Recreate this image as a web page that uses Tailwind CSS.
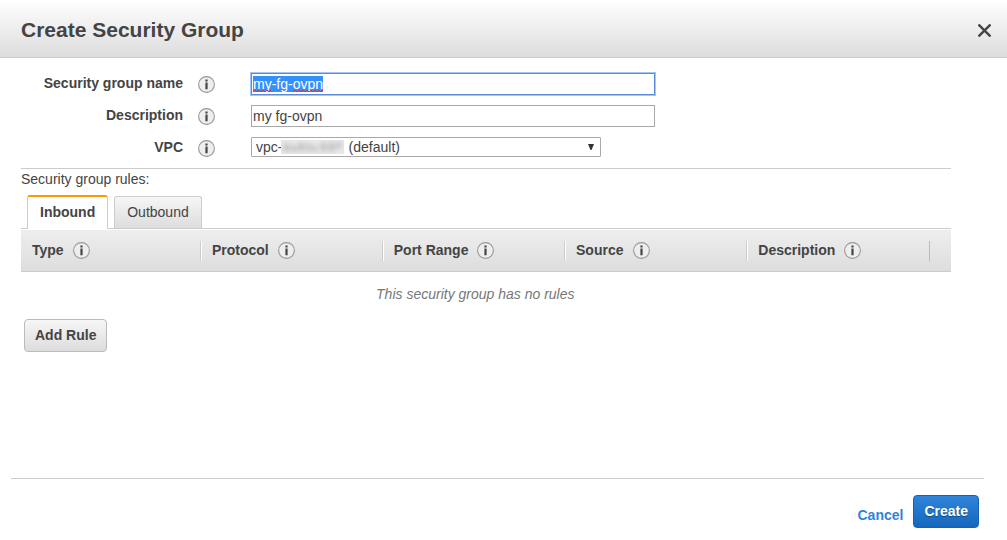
<!DOCTYPE html>
<html lang="en">
<head>
<meta charset="utf-8">
<meta name="viewport" content="width=device-width, initial-scale=1">
<title>Create Security Group</title>
<script src="https://cdn.jsdelivr.net/npm/@tailwindcss/browser@4"></script>
</head>
<body class="flex min-h-screen flex-col bg-white font-['Liberation_Sans',Arial,sans-serif] text-sm text-[#444]">
<svg class="hidden" aria-hidden="true">
  <defs>
    <symbol id="info" viewBox="0 0 17 17">
      <circle cx="8.5" cy="8.5" r="7.9" fill="#eee" stroke="#999" stroke-width="1.1"/>
      <path d="M7.4 3.5h2.2v2H7.4zM7.4 6.6h2.2v6.6H7.4z" fill="#444"/>
    </symbol>
  </defs>
</svg>

<header class="flex h-[58px] items-center justify-between border-b border-[#ccc] bg-linear-to-b from-white to-[#ddd] pr-[15px] pl-[21px]">
  <h1 class="pt-[3px] text-[21px] font-bold">Create Security Group</h1>
  <button type="button" aria-label="Close" class="mt-1 p-px">
    <svg class="size-[13px]" viewBox="0 0 13 13" fill="none" stroke="#444" stroke-width="2.4"><path d="M.5.5l12 12M12.5.5l-12 12"/></svg>
  </button>
</header>

<main class="mr-14 ml-[21px] flex-1">
  <form class="grid grid-cols-[162px_17px_minmax(0,404px)] gap-x-[15px] gap-y-[10px] border-b border-[#ccc] pt-[15px] pb-[11px]">
    <label for="name" class="h-[22px] text-right leading-[21px] font-bold">Security group name</label>
    <svg class="mt-[3px] size-[17px]" role="img" aria-label="Info"><use href="#info"/></svg>
    <div class="relative ml-[21px] -mr-[21px]">
      <input id="name" type="text" value="my-fg-ovpn" autofocus spellcheck="false" class="block h-[22px] w-full border border-[#5a8ad6] px-px outline-1 outline-[#a3c5f7] selection:bg-[#3390ff] selection:text-white">
      <svg class="pointer-events-none absolute top-[16px] left-[2px] h-[4px] w-[70px]" viewBox="0 0 70 4" fill="none" stroke="#d6304a" aria-hidden="true">
        <path d="M0 3l2-2 2 2 2-2 2 2 2-2 2 2 2-2 2 2 2-2M40 3l2-2 2 2 2-2 2 2 2-2 2 2 2-2 2 2 2-2 2 2 2-2 2 2 2-2 2 2 2-2"/>
      </svg>
    </div>

    <label for="description" class="h-[22px] text-right leading-[21px] font-bold">Description</label>
    <svg class="mt-[3px] size-[17px]" role="img" aria-label="Info"><use href="#info"/></svg>
    <div class="ml-[21px] -mr-[21px]">
      <input id="description" type="text" value="my fg-ovpn" class="block h-[22px] w-full border border-[#a9a9a9] px-px">
    </div>

    <label for="vpc" class="h-[20px] text-right leading-[21px] font-bold">VPC</label>
    <svg class="mt-[3px] size-[17px]" role="img" aria-label="Info"><use href="#info"/></svg>
    <div class="relative ml-[21px] w-[350px]">
      <select id="vpc" class="block h-[20px] w-full appearance-none rounded-[1px] border border-[#a9a9a9] bg-white pl-1 leading-[18px]">
        <option>vpc-&nbsp;&nbsp;&nbsp;&nbsp;&nbsp;&nbsp;&nbsp;&nbsp;&nbsp;&nbsp;&nbsp;&nbsp;&nbsp;&nbsp;&nbsp;&nbsp;&nbsp;(default)</option>
      </select>
      <svg class="pointer-events-none absolute top-[3px] left-[30px] h-[14px] w-[64px]" viewBox="0 0 64 14" aria-hidden="true">
        <defs><filter id="soft" x="-20%" y="-50%" width="140%" height="200%"><feGaussianBlur stdDeviation="2.6"/></filter></defs>
        <path d="M0 0h63v14H0z" fill="#e8e8e8"/>
        <path d="M3 4h5v7H3zM10 6h6v5h-6zM18 3h5v8h-5zM26 4h4v7h-4zM32 6h4v5h-4zM40 3h5v8h-5zM48 3h5v8h-5zM55 3h5v5h-5z" fill="#bbb" filter="url(#soft)"/>
      </svg>
      <svg class="pointer-events-none absolute top-[7px] right-[7px] h-[6px] w-[6px]" viewBox="0 0 6 6" aria-hidden="true"><path d="M0 0h6L3.5 6h-1z" fill="#333"/></svg>
    </div>
  </form>

  <section>
    <h2 class="leading-5">Security group rules:</h2>
    <div role="tablist" class="flex h-10 items-end gap-[6px] border-b border-[#ccc] pl-[6px]">
      <button type="button" role="tab" aria-selected="true" class="-mb-px h-[34px] rounded-t-[3px] border border-t-2 border-b-0 border-[#ccc] border-t-[#f90] bg-white px-3 pb-[2px] font-bold">Inbound</button>
      <button type="button" role="tab" aria-selected="false" class="h-[32px] rounded-t-[3px] border border-b-0 border-[#ccc] bg-linear-to-b from-[#f6f6f6] to-[#ddd] px-3 pb-[2px]">Outbound</button>
    </div>
    <table class="mt-px w-full table-fixed border-separate border-spacing-0">
      <colgroup><col class="w-[19.35%]"><col class="w-[19.55%]"><col class="w-[19.6%]"><col class="w-[19.6%]"><col class="w-[19.6%]"><col></colgroup>
      <thead>
        <tr class="h-[42px] bg-linear-to-b from-[#eee] to-[#ddd] text-left">
          <th scope="col" class="border-b border-[#ccc] p-0"><div class="flex h-5 items-center gap-[9px] border-r border-[#ccc] pl-[11px] leading-[18px] shadow-[1px_0_0_#fff]"><span class="pb-px">Type</span><svg class="size-[17px]" role="img" aria-label="Info"><use href="#info"/></svg></div></th>
          <th scope="col" class="border-b border-[#ccc] p-0"><div class="flex h-5 items-center gap-[9px] border-r border-[#ccc] pl-[11px] leading-[18px] shadow-[1px_0_0_#fff]"><span class="pb-px">Protocol</span><svg class="size-[17px]" role="img" aria-label="Info"><use href="#info"/></svg></div></th>
          <th scope="col" class="border-b border-[#ccc] p-0"><div class="flex h-5 items-center gap-[9px] border-r border-[#ccc] pl-[11px] leading-[18px] shadow-[1px_0_0_#fff]"><span class="pb-px">Port Range</span><svg class="size-[17px]" role="img" aria-label="Info"><use href="#info"/></svg></div></th>
          <th scope="col" class="border-b border-[#ccc] p-0"><div class="flex h-5 items-center gap-[9px] border-r border-[#ccc] pl-[11px] leading-[18px] shadow-[1px_0_0_#fff]"><span class="pb-px">Source</span><svg class="size-[17px]" role="img" aria-label="Info"><use href="#info"/></svg></div></th>
          <th scope="col" class="border-b border-[#ccc] p-0"><div class="flex h-5 items-center gap-[9px] border-r border-[#bbb] pl-[11px] leading-[18px]"><span class="pb-px">Description</span><svg class="size-[17px]" role="img" aria-label="Info"><use href="#info"/></svg></div></th>
          <td class="border-b border-[#ccc] p-0"></td>
        </tr>
      </thead>
      <tbody>
        <tr><td colspan="5" class="h-[44px] p-0 text-center text-[#777] italic">This security group has no rules</td><td class="p-0"></td></tr>
      </tbody>
    </table>
    <button type="button" class="mt-[3px] ml-[3px] h-[33px] rounded-[4px] border border-[#bbb] bg-linear-to-b from-[#f6f6f6] to-[#ddd] px-[10px] pb-[2px] font-bold">Add Rule</button>
  </section>
</main>

<footer class="mr-[23px] ml-[11px] flex items-center justify-end gap-[10px] border-t border-[#ccc] pt-4 pr-[5px] pb-3">
  <a href="#" class="pt-[6px] font-bold text-[#2f83da]">Cancel</a>
  <button type="button" class="h-[33px] rounded-[4px] border border-[#1462b3] bg-linear-to-b from-[#2f84db] to-[#1467bd] px-[10px] pb-[2px] font-bold text-white text-shadow-[0_1px_1px_#0006]">Create</button>
</footer>
<script>
  const nameField = document.getElementById('name');
  nameField.focus();
  nameField.select();
</script>
</body>
</html>
